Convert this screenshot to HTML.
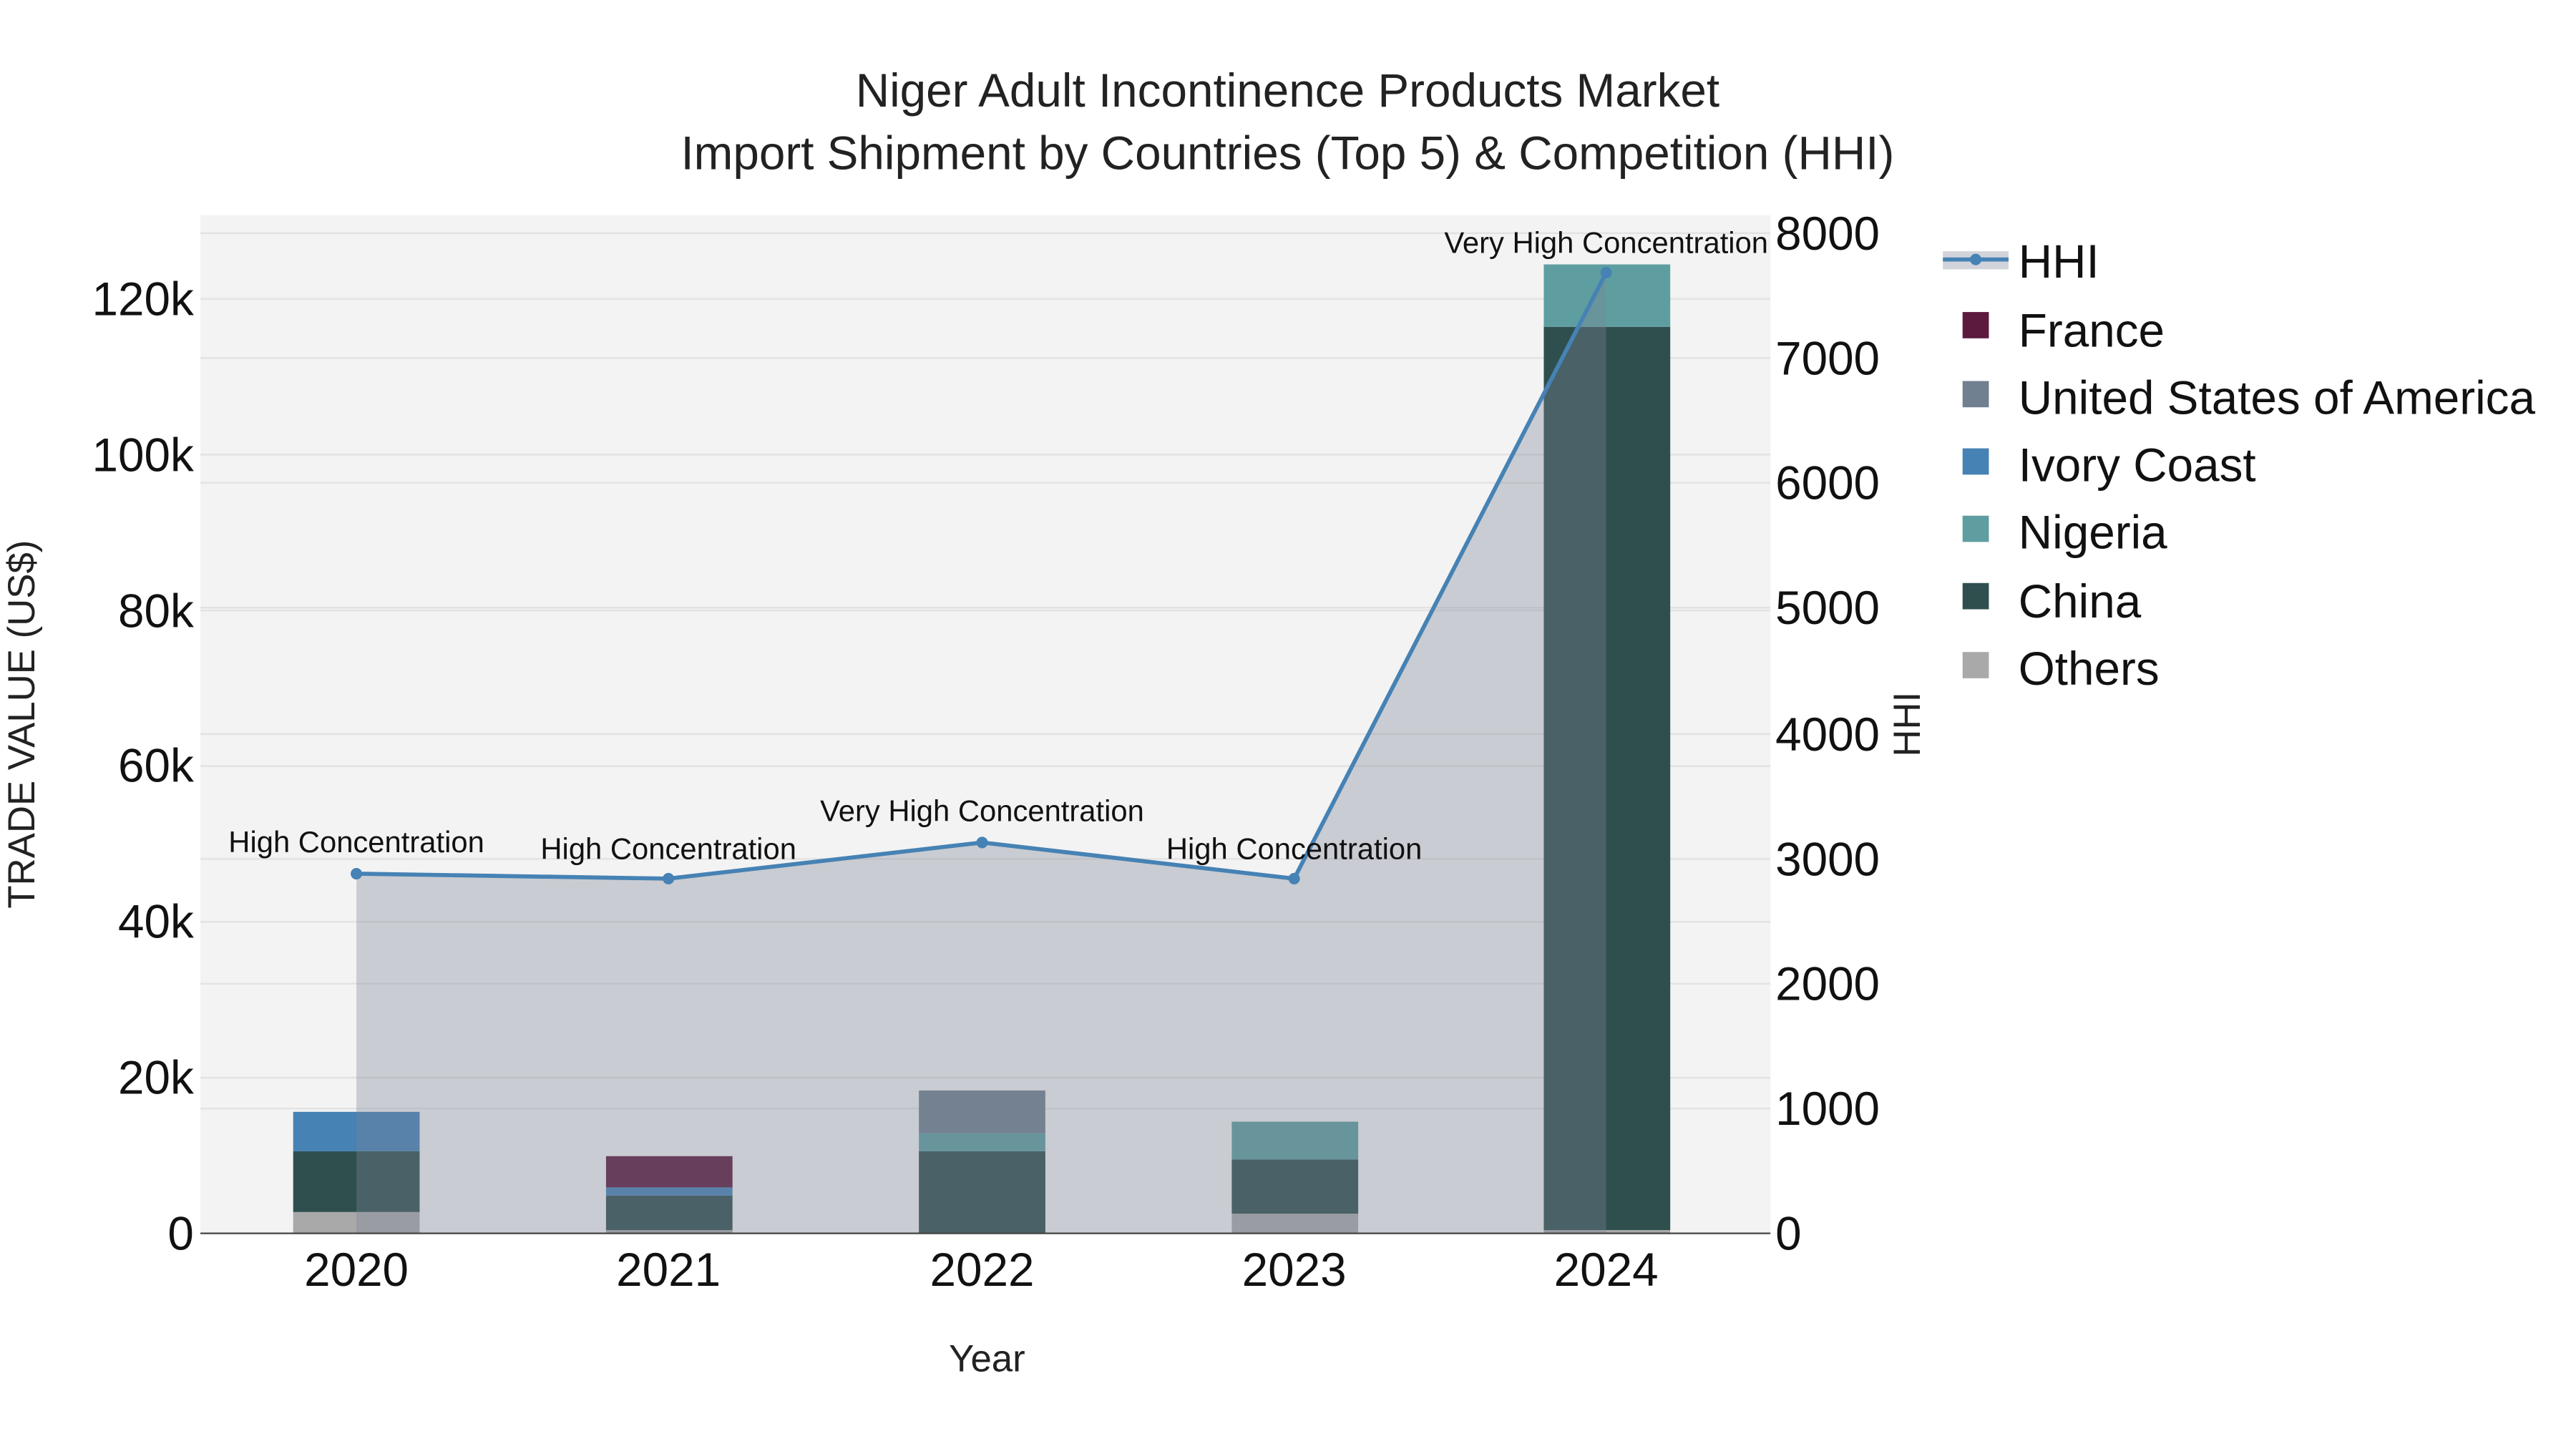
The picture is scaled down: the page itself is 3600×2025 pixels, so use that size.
<!DOCTYPE html>
<html><head><meta charset="utf-8"><style>
html,body{margin:0;padding:0;background:#fff;}
svg{display:block;font-family:"Liberation Sans",sans-serif;}
</style></head><body>
<svg width="3600" height="2025" viewBox="0 0 1568.5 882.3" xmlns="http://www.w3.org/2000/svg">
<rect x="0" y="0" width="1568.5" height="882.3" fill="#fff"/>
<rect x="122" y="131" width="956" height="620" fill="#f3f3f3"/>
<g stroke="#e2e2e2" stroke-width="1">
<line x1="122" x2="1078" y1="656.2" y2="656.2"/><line x1="122" x2="1078" y1="561.3" y2="561.3"/>
<line x1="122" x2="1078" y1="466.5" y2="466.5"/><line x1="122" x2="1078" y1="371.7" y2="371.7"/>
<line x1="122" x2="1078" y1="276.8" y2="276.8"/><line x1="122" x2="1078" y1="182" y2="182"/>
<line x1="122" x2="1078" y1="675" y2="675"/><line x1="122" x2="1078" y1="599" y2="599"/>
<line x1="122" x2="1078" y1="523" y2="523"/><line x1="122" x2="1078" y1="447" y2="447"/>
<line x1="122" x2="1078" y1="370" y2="370"/><line x1="122" x2="1078" y1="294" y2="294"/>
<line x1="122" x2="1078" y1="218" y2="218"/><line x1="122" x2="1078" y1="142" y2="142"/>
</g>
<g>
<rect x="178.5" y="738" width="77" height="13" fill="#a9a9a9"/>
<rect x="178.5" y="701" width="77" height="37" fill="#2f4f4f"/>
<rect x="178.5" y="677" width="77" height="24" fill="#4682b4"/>
<rect x="369" y="749" width="77" height="2" fill="#a9a9a9"/>
<rect x="369" y="728" width="77" height="21" fill="#2f4f4f"/>
<rect x="369" y="723" width="77" height="5" fill="#4682b4"/>
<rect x="369" y="704" width="77" height="19" fill="#5c1a3e"/>
<rect x="559.5" y="701" width="77" height="50" fill="#2f4f4f"/>
<rect x="559.5" y="690" width="77" height="11" fill="#5f9ea0"/>
<rect x="559.5" y="664" width="77" height="26" fill="#708090"/>
<rect x="750" y="739" width="77" height="12" fill="#a9a9a9"/>
<rect x="750" y="706" width="77" height="33" fill="#2f4f4f"/>
<rect x="750" y="683" width="77" height="23" fill="#5f9ea0"/>
<rect x="940" y="749" width="77" height="2" fill="#a9a9a9"/>
<rect x="940" y="199" width="77" height="550" fill="#2f4f4f"/>
<rect x="940" y="161" width="77" height="38" fill="#5f9ea0"/>
</g>
<polygon points="217,532 407,535 598,513 788,535 978,166 978,751 217,751" fill="rgba(123,132,150,0.35)"/>
<polyline points="217,532 407,535 598,513 788,535 978,166" fill="none" stroke="#4682b4" stroke-width="2.5"/>
<g fill="#4682b4"><circle cx="217" cy="532" r="3.5"/><circle cx="407" cy="535" r="3.5"/><circle cx="598" cy="513" r="3.5"/><circle cx="788" cy="535" r="3.5"/><circle cx="978" cy="166" r="3.5"/></g>
<line x1="122" x2="1078" y1="751" y2="751" stroke="#444" stroke-width="1"/>
<g font-size="18.2" fill="#111" text-anchor="middle">
<text x="217" y="519">High Concentration</text>
<text x="407" y="523">High Concentration</text>
<text x="598" y="500">Very High Concentration</text>
<text x="788" y="523">High Concentration</text>
<text x="978" y="154">Very High Concentration</text>
</g>
<g font-size="28.6" fill="#222" text-anchor="middle">
<text x="784" y="65">Niger Adult Incontinence Products Market</text>
<text x="784" y="103">Import Shipment by Countries (Top 5) &amp; Competition (HHI)</text>
</g>
<g font-size="28.6" fill="#111" text-anchor="end">
<text x="118" y="761">0</text><text x="118" y="666">20k</text><text x="118" y="571">40k</text>
<text x="118" y="476">60k</text><text x="118" y="382">80k</text><text x="118" y="287">100k</text><text x="118" y="192">120k</text>
</g>
<g font-size="28.6" fill="#111" text-anchor="start">
<text x="1081" y="761">0</text><text x="1081" y="685">1000</text><text x="1081" y="609">2000</text>
<text x="1081" y="533">3000</text><text x="1081" y="457">4000</text><text x="1081" y="380">5000</text>
<text x="1081" y="304">6000</text><text x="1081" y="228">7000</text><text x="1081" y="152">8000</text>
</g>
<g font-size="28.6" fill="#111" text-anchor="middle">
<text x="217" y="783">2020</text><text x="407" y="783">2021</text><text x="598" y="783">2022</text>
<text x="788" y="783">2023</text><text x="978" y="783">2024</text>
</g>
<text x="601" y="835" font-size="23" text-anchor="middle" fill="#222">Year</text>
<text transform="translate(21,441) rotate(-90)" font-size="23" text-anchor="middle" fill="#222">TRADE VALUE (US$)</text>
<text transform="translate(1169,441) rotate(-90)" font-size="23" text-anchor="middle" fill="#222">HHI</text>
<rect x="1183" y="153" width="40" height="11" fill="rgba(123,132,150,0.35)"/>
<line x1="1183" x2="1223" y1="158" y2="158" stroke="#4682b4" stroke-width="2.5"/>
<circle cx="1203" cy="158" r="3.5" fill="#4682b4"/>
<rect x="1195" y="190" width="16" height="16" fill="#5c1a3e"/>
<rect x="1195" y="232" width="16" height="16" fill="#708090"/>
<rect x="1195" y="273" width="16" height="16" fill="#4682b4"/>
<rect x="1195" y="314" width="16" height="16" fill="#5f9ea0"/>
<rect x="1195" y="355" width="16" height="16" fill="#2f4f4f"/>
<rect x="1195" y="397" width="16" height="16" fill="#a9a9a9"/>
<g font-size="28.6" fill="#111">
<text x="1229" y="169">HHI</text><text x="1229" y="211">France</text>
<text x="1229" y="252">United States of America</text><text x="1229" y="293">Ivory Coast</text>
<text x="1229" y="334">Nigeria</text><text x="1229" y="376">China</text><text x="1229" y="417">Others</text>
</g>
</svg>
</body></html>
